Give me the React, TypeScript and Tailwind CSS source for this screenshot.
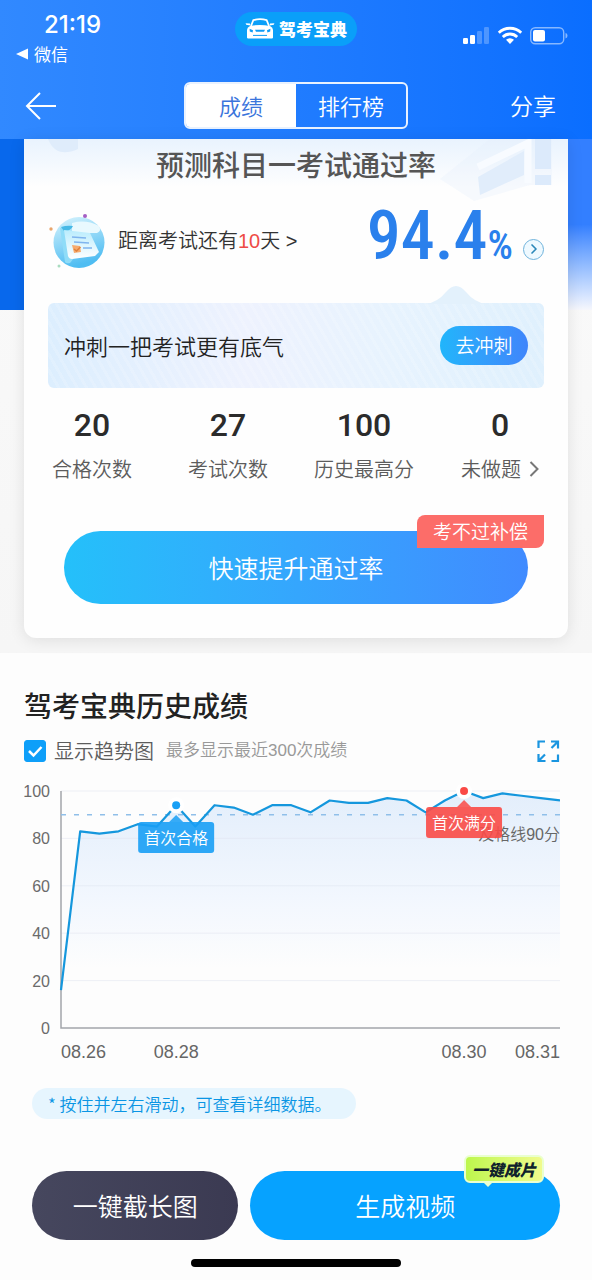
import { useState } from "react";
import { ChevronRight } from "lucide-react";

const SCORES = [
  16, 83, 82, 83, 86, 85, 94, 85, 94, 93, 90, 94, 94, 91, 96, 95, 95, 97, 96, 91, 96, 100, 97, 99,
  98, 97, 96,
];

const STATS = [
  { value: "20", label: "合格次数" },
  { value: "27", label: "考试次数" },
  { value: "100", label: "历史最高分" },
  { value: "0", label: "未做题", href: "#undone" },
];

// Chart plot area, in viewBox units
const PLOT = { left: 37, right: 536, top: 10, bottom: 247 };

const px = (i: number) => PLOT.left + (i * (PLOT.right - PLOT.left)) / (SCORES.length - 1);
const py = (v: number) => PLOT.bottom - (v * (PLOT.bottom - PLOT.top)) / 100;

function CarLogo() {
  return (
    <svg viewBox="0 0 30 24" className="h-6 w-[30px]" fill="none" aria-hidden="true">
      <path d="M6 9 8.3 3.2Q15 1.2 21.7 3.2L24 9" stroke="white" strokeWidth="1.8" />
      <path d="M.6 6.2 5 6.6 5.4 8.6 1.2 7.8ZM29.4 6.2 25 6.6 24.6 8.6 28.8 7.8Z" fill="white" />
      <path
        d="M5 9Q15 7 25 9 28 10.4 28 13V20.5Q28 21.6 26.8 21.6H3.2Q2 21.6 2 20.5V13Q2 10.4 5 9Z"
        fill="white"
      />
      <path d="M10 12.8H20L19 14.8H11Z" fill="#0d9cf8" />
      <path d="M4.6 11.8 8 13.2 7.6 15.4 4.8 14.6ZM25.4 11.8 22 13.2 22.4 15.4 25.2 14.6Z" fill="#0d9cf8" />
      <path d="M8 18.4H22" stroke="#0d9cf8" strokeWidth="1" />
    </svg>
  );
}

function StatusIcons() {
  return (
    <svg viewBox="0 0 106 20" className="h-5 w-[106px]" aria-hidden="true">
      <g fill="white">
        <rect x="1" y="12" width="5" height="6" rx="1.2" />
        <rect x="8" y="9" width="5" height="9" rx="1.2" />
        <rect x="15" y="5" width="5" height="13" rx="1.2" opacity=".25" />
        <rect x="22" y="1" width="5" height="17" rx="1.2" opacity=".25" />
      </g>
      <g fill="none" stroke="white" strokeWidth="2.8">
        <path d="M36.8 6.8a16 16 0 0 1 22.4 0" />
        <path d="M40.8 11a10.2 10.2 0 0 1 14.4 0" />
      </g>
      <path d="M44 13.8a5.8 5.8 0 0 1 8 0L48 18Z" fill="white" />
      <rect x="68.7" y="1.7" width="33" height="16" rx="4.5" fill="none" stroke="white" strokeOpacity=".5" strokeWidth="1.4" />
      <rect x="71" y="4" width="12" height="11.5" rx="2" fill="white" />
      <path d="M103.5 7V12.5Q105.5 12 105.5 9.7T103.5 7Z" fill="white" fillOpacity=".5" />
    </svg>
  );
}

function ExamIcon() {
  return (
    <svg viewBox="0 0 58 58" className="size-[58px] shrink-0" aria-hidden="true">
      <defs>
        <linearGradient id="examDisc" x1="0" y1="0" x2="0.3" y2="1">
          <stop offset="0" stopColor="#d9f4fd" />
          <stop offset="1" stopColor="#4fbdf2" />
        </linearGradient>
        <linearGradient id="examSheet" x1="0" y1="0" x2="0" y2="1">
          <stop offset="0" stopColor="#b9ecfd" />
          <stop offset="1" stopColor="#ffffff" />
        </linearGradient>
      </defs>
      <circle cx="31" cy="30.5" r="25.5" fill="url(#examDisc)" />
      <path d="M12 16 17 50Q18 52 22 51L26 46 20 14Z" fill="#8fdcf8" />
      <path d="M24 11Q38 7 51 14 54 19 49 21H24Z" fill="#e9f9fe" />
      <path d="M13 15Q19 13 25 14 23 19 16 19Z" fill="#46b9e6" />
      <path d="M16 18 42 21 51 40 47 44 24 47Q21 47 20 44Z" fill="url(#examSheet)" />
      <path d="M24 25 38 26M26 30 41 31M35 36 44 36" stroke="#7fb4ee" strokeWidth="1.6" />
      <path d="M24 33 32 34 33 40 26 41Z" fill="#f6ab6e" />
      <path d="m26 37 2.5 2 4-4" fill="none" stroke="#e0813c" strokeWidth="1.5" />
      <circle cx="37" cy="4" r="2" fill="#a55fc4" />
      <circle cx="3" cy="17" r="1.7" fill="#e8a56c" />
      <circle cx="11" cy="54" r="1.5" fill="#a9dcc0" />
    </svg>
  );
}

function ExpandIcon() {
  return (
    <svg viewBox="0 0 24 24" className="size-6" fill="none" stroke="#1a95e0" strokeWidth="2.2" aria-hidden="true">
      <path d="M2.5 9V2.5H9M22 15.5V22H15.5" />
      <path d="M15 2.5H22V9.5M22 2.5 15.5 9M9.5 22H2.5V15M2.5 22 9 15.5" />
    </svg>
  );
}

interface MarkerProps {
  x: number;
  y: number;
  boxY: number;
  color: string;
  label: string;
}

function Marker({ x, y, boxY, color, label }: MarkerProps) {
  return (
    <g>
      <circle cx={x} cy={y} r="8" fill="white" />
      <circle cx={x} cy={y} r="4" fill={color} />
      <path d={`M${x - 7} ${boxY}L${x} ${boxY - 7}L${x + 7} ${boxY}Z`} fill={color} opacity=".85" />
      <rect x={x - 38} y={boxY} width="76" height="31" rx="3" fill={color} opacity=".9" />
      <text x={x} y={boxY + 22} textAnchor="middle" fontSize="16" fill="white">
        {label}
      </text>
    </g>
  );
}

function ScoreChart({ showTrend }: { showTrend: boolean }) {
  const line = SCORES.map((v, i) => `${i ? "L" : "M"}${px(i)} ${py(v)}`).join("");

  return (
    <svg
      viewBox="0 0 536 283"
      className="mt-4 block h-auto w-full font-['Liberation_Sans','Noto_Sans_CJK_SC',sans-serif]"
      role="img"
      aria-label="历史成绩趋势图"
    >
      <defs>
        <linearGradient id="trendFill" x1="0" y1="0" x2="0" y2="1">
          <stop offset="0" stopColor="#e3eefb" />
          <stop offset="0.45" stopColor="#f2f7fe" />
          <stop offset="0.75" stopColor="#fdfdfd" />
        </linearGradient>
      </defs>
      {showTrend && (
        <path d={`${line}V${PLOT.bottom}H${PLOT.left}Z`} fill="url(#trendFill)" />
      )}
      {[0, 20, 40, 60, 80, 100].map((tick) => (
        <g key={tick}>
          {tick > 0 && (
            <path d={`M${PLOT.left} ${py(tick)}H${PLOT.right}`} stroke="#dfe3f0" strokeOpacity=".5" />
          )}
          <text x="26" y={py(tick) + 6} textAnchor="end" fontSize="16" fill="#6b6b6b">
            {tick}
          </text>
        </g>
      ))}
      <path
        d={`M${PLOT.left} ${PLOT.top}V${PLOT.bottom}H${PLOT.right}`}
        fill="none"
        stroke="#a3a5ab"
        strokeWidth="1.5"
      />
      {/* Pass line */}
      <path
        d={`M${PLOT.left} ${py(90)}H${PLOT.right}`}
        stroke="#90bfe9"
        strokeWidth="1.5"
        strokeDasharray="5 8"
      />
      <text x="536" y="59" textAnchor="end" fontSize="16" fill="#666666">
        及格线90分
      </text>
      {showTrend && (
        <>
          <path d={line} fill="none" stroke="#1597dd" strokeWidth="2.2" strokeLinejoin="round" />
          <Marker x={px(6)} y={py(94)} boxY={41} color="#189ff5" label="首次合格" />
          <Marker x={px(21)} y={py(100)} boxY={26} color="#fa4a46" label="首次满分" />
        </>
      )}
      <g fontSize="18" fill="#666666">
        <text x={PLOT.left} y="277">08.26</text>
        <text x={px(6)} y="277" textAnchor="middle">08.28</text>
        <text x={px(21)} y="277" textAnchor="middle">08.30</text>
        <text x={PLOT.right} y="277" textAnchor="end">08.31</text>
      </g>
    </svg>
  );
}

function Header() {
  return (
    <header className="bg-linear-to-r from-[#3189ff] to-[#0a6eff] pb-2.5 text-white">
      {/* Status bar */}
      <div className="grid h-[72px] grid-cols-[1fr_auto_1fr] items-start pt-3">
        <div className="pl-4">
          <div className="pl-7 font-['Inter',sans-serif] text-[24px] leading-[26px] font-medium">21:19</div>
          <a href="#wechat" className="flex items-center gap-1.5 text-[17px] leading-8 font-normal">
            <svg viewBox="0 0 12 12" className="size-3" aria-hidden="true">
              <path d="M0 6 12 .5V11.5Z" fill="white" />
            </svg>
            微信
          </a>
        </div>
        <div className="flex h-[34px] items-center gap-1 rounded-full bg-[#0a9ff9] px-2.5 text-[17px] font-black">
          <CarLogo />
          <span>驾考宝典</span>
        </div>
        <div className="flex justify-end pt-3.5 pr-6">
          <StatusIcons />
        </div>
      </div>

      <nav className="grid grid-cols-[1fr_auto_1fr] items-center px-6 pt-2.5">
        <button type="button" aria-label="返回" className="w-8">
          <svg viewBox="0 0 32 28" className="h-7 w-8" fill="none" stroke="white" strokeWidth="2" aria-hidden="true">
            <path d="M32 14H3M16 1 3 14 16 27" />
          </svg>
        </button>
        <div role="tablist" className="flex h-[47px] overflow-hidden rounded-md border-2 border-white/90 text-[22px]">
          <button type="button" role="tab" aria-selected="true" className="w-[110px] bg-white text-[#3a74dc]">
            成绩
          </button>
          <button type="button" role="tab" aria-selected="false" className="w-[110px]">
            排行榜
          </button>
        </div>
        <button type="button" className="mr-3 justify-self-end text-[23px]">
          分享
        </button>
      </nav>
    </header>
  );
}

function PassRateCard() {
  return (
    <section className="relative bg-linear-to-b from-[#fafafa] to-[#f6f6f6] px-6 pb-[15px]">
      <div aria-hidden="true" className="absolute top-0 left-0 h-[171px] w-1/2 bg-[#0868ec]" />
      <div
        aria-hidden="true"
        className="absolute top-0 right-0 h-[171px] w-1/2 bg-linear-to-b from-[#337fff] from-50% to-[#f6f7fc]"
      />
      <div className="relative rounded-b-xl bg-[#fefefe] bg-[linear-gradient(#e9f3fe,#fefefe_48px)] pt-2 pb-[34px] shadow-[0_2px_16px_rgba(0,0,0,0.1)]">
        <svg viewBox="0 0 120 70" className="absolute top-0 right-2 h-[70px] w-[120px]" aria-hidden="true">
          <path d="M0 40 50 0H112V46H90L34 62Z" fill="#e3effc" fillOpacity=".3" />
          <path d="M38 38 84 12V36L40 56Z" fill="#e1edfb" />
          <path d="M95 0H111V30H95ZM95 36H111V46H95Z" fill="#dceafb" />
          <path d="M38 28 88 4V44" fill="none" stroke="#f8fbff" strokeWidth="7" />
        </svg>
        <svg viewBox="0 0 30 16" className="absolute top-0 left-6 h-4 w-[30px]" aria-hidden="true">
          <path d="M0 0H30V10Q8 20 0 0Z" fill="#dfecfb" />
        </svg>

        <h1 className="relative text-center text-[28px] leading-[34px] font-medium text-[#555555]">
          预测科目一考试通过率
        </h1>

        <div className="mt-[22px] flex h-[76px] items-center justify-between px-6">
          <a
            href="#exam-date"
            className="flex items-center gap-3 font-['Liberation_Sans','Noto_Sans_CJK_SC',sans-serif] text-[20px] text-[#333333]"
          >
            <ExamIcon />
            <span>
              距离考试还有<span className="text-[#ee4b46]">10</span>天 &gt;
            </span>
          </a>
          <div className="flex items-center gap-2.5">
            <p className="font-['Roboto_Condensed',Roboto,sans-serif] text-[68px] leading-[76px] font-medium text-[#2a80ec]">
              94.4<span className="text-[40px]">%</span>
            </p>
            <button
              type="button"
              aria-label="查看详情"
              className="mt-4 flex size-[21px] items-center justify-center rounded-full border border-[#6fb3dc] bg-[#eef9ff] text-[#2a86b8]"
            >
              <ChevronRight className="size-4" strokeWidth={2.5} />
            </button>
          </div>
        </div>

        <div className="relative mx-6 mt-6 flex h-[85px] items-center justify-between rounded-md bg-[repeating-linear-gradient(60deg,rgba(255,255,255,0.15)_0_3px,transparent_3px_8px),linear-gradient(90deg,#dceefe,#eef2fe_40%,#e7f3fe_70%,#dff0fd)] px-4">
          <svg viewBox="0 0 60 20" className="absolute -top-[19px] right-[58px] h-5 w-[60px]" aria-hidden="true">
            <path d="M0 20Q12 18 20 8 30-4 40 8 48 18 60 20Z" fill="#e3f1fc" />
          </svg>
          <p className="text-[22px] text-[#222222]">冲刺一把考试更有底气</p>
          <button
            type="button"
            className="h-[39px] w-[88px] rounded-full bg-linear-to-r from-[#20b5fb] to-[#3f85fb] text-[19px] text-white"
          >
            去冲刺
          </button>
        </div>

        <dl className="mt-[17px] grid grid-cols-4 text-center">
          {STATS.map((stat) => (
            <div key={stat.label} className="flex flex-col-reverse gap-2.5">
              <dt className="text-[20px] leading-7 text-[#5c5c5c]">
                {stat.href ? (
                  <a href={stat.href} className="flex items-center justify-center gap-2">
                    {stat.label}
                    <svg viewBox="0 0 10 16" className="h-4 w-2.5" fill="none" stroke="#777777" strokeWidth="2" aria-hidden="true">
                      <path d="M1.5 1 8.5 8 1.5 15" />
                    </svg>
                  </a>
                ) : (
                  stat.label
                )}
              </dt>
              <dd className="font-['Roboto',sans-serif] text-[32px] leading-10 font-medium text-[#2b2b2b]">
                {stat.value}
              </dd>
            </div>
          ))}
        </dl>

        <div className="relative mx-10 mt-12">
          <button
            type="button"
            className="h-[73px] w-full rounded-full bg-linear-to-r from-[#24c0fa] to-[#408bff] text-[25px] text-white"
          >
            快速提升通过率
          </button>
          <span className="absolute -top-4 -right-4 flex h-[33px] w-[127px] items-center justify-center rounded-tl-lg rounded-br-lg bg-[#fc6d69] text-[19px] text-white">
            考不过补偿
          </span>
        </div>
      </div>
    </section>
  );
}

export default function App() {
  const [showTrend, setShowTrend] = useState(true);

  return (
    <div className="min-h-screen bg-[#fdfdfd] font-['Noto_Sans_CJK_SC','Liberation_Sans',sans-serif] font-[350]">
      <Header />
      <PassRateCard />

      <section className="pt-8 pr-8 pl-6">
        <h2 className="text-[28px] leading-10 font-medium text-[#222222]">驾考宝典历史成绩</h2>
        <div className="mt-3 flex h-7 items-center">
          <label className="flex items-center gap-2 text-[20px] text-[#5c5c5c]">
            <span className="relative flex size-[22px]">
              <input
                type="checkbox"
                checked={showTrend}
                onChange={(e) => setShowTrend(e.target.checked)}
                className="peer size-full appearance-none rounded-[3px] border border-[#0e9ff9] checked:bg-[#0e9ff9]"
              />
              <svg
                viewBox="0 0 22 22"
                className="pointer-events-none absolute inset-0 hidden peer-checked:block"
                fill="none"
                stroke="white"
                strokeWidth="2.5"
                aria-hidden="true"
              >
                <path d="M5 11 9.5 15.5 17.5 7" />
              </svg>
            </span>
            显示趋势图
          </label>
          <span className="ml-3 font-['Liberation_Sans','Noto_Sans_CJK_SC',sans-serif] text-[17px] text-[#999999]">
            最多显示最近300次成绩
          </span>
          <button type="button" aria-label="全屏" className="ml-auto">
            <ExpandIcon />
          </button>
        </div>

        <ScoreChart showTrend={showTrend} />

        <p className="mt-6 ml-2 flex h-[31px] w-fit items-center rounded-full bg-[#e6f5fe] pr-6 pl-4 text-[17px] text-[#0a95e4]">
          * 按住并左右滑动，可查看详细数据。
        </p>
      </section>

      <footer className="pb-3">
        <div className="mt-13 flex gap-3 px-8 text-[25px] text-white">
          <button type="button" className="h-[69px] flex-2 rounded-full bg-linear-to-r from-[#46475e] to-[#3b3a52]">
            一键截长图
          </button>
          <div className="relative flex-3">
            <button type="button" className="h-[69px] w-full rounded-full bg-[#06a2ff]">
              生成视频
            </button>
            <span className="absolute -top-4 right-4 rounded-md border-2 border-[#eaffd0] bg-linear-to-r from-[#bdf74c] to-[#f0fb8c] px-1.5 text-[16px] leading-6 font-black text-[#10222c] italic">
              一键成片
              <svg viewBox="0 0 12 6" className="absolute top-full left-4 h-1.5 w-3" aria-hidden="true">
                <path d="M0 0H12L6 6Z" fill="#eaffd0" />
              </svg>
            </span>
          </div>
        </div>
        <div className="mx-auto mt-[19px] h-2 w-[210px] rounded-full bg-black" />
      </footer>
    </div>
  );
}
